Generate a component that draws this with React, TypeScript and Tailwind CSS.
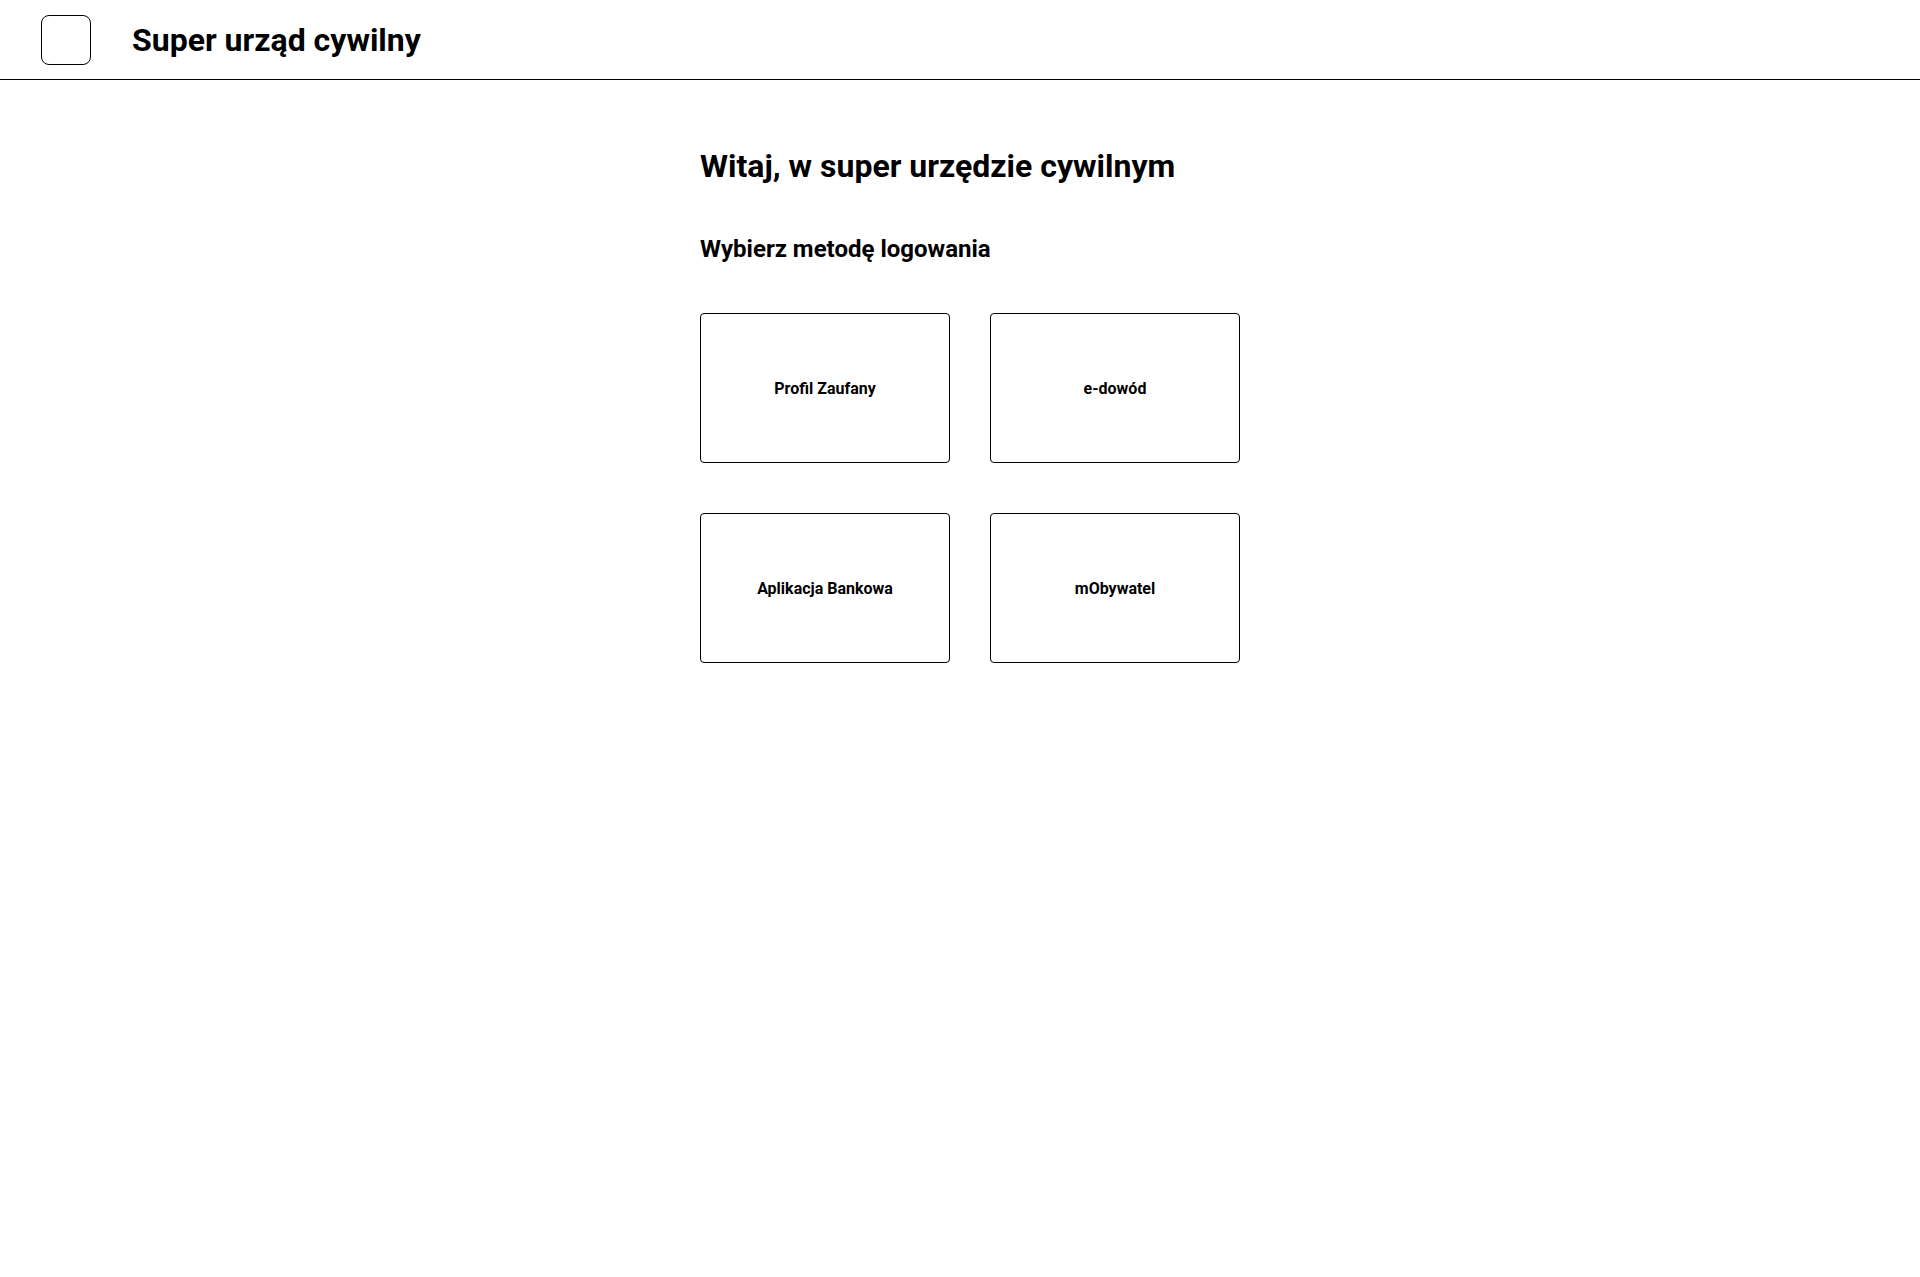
import React from "react";

const methods = ["Profil Zaufany", "e-dowód", "Aplikacja Bankowa", "mObywatel"];

export default function App() {
  return (
    <div className="min-h-[1277px] w-full bg-white text-black" style={{ fontFamily: "Roboto, 'Noto Sans', sans-serif" }}>
      <header className="flex h-[80px] items-center gap-[41px] border-b border-black pl-[41px]">
        <div className="h-[50px] w-[50px] rounded-[8px] border border-black" />
        <h1 className="text-[32px] font-bold leading-[40px]">Super urząd cywilny</h1>
      </header>
      <main className="ml-[700px] w-[540px] pt-[66px]">
        <h2 className="text-[32px] font-bold leading-[40px]">Witaj, w super urzędzie cywilnym</h2>
        <h3 className="mt-[47px] text-[24px] font-bold leading-[32px]">Wybierz metodę logowania</h3>
        <div className="mt-[48px] grid grid-cols-[250px_250px] gap-x-[40px] gap-y-[50px]">
          {methods.map((m) => (
            <button
              key={m}
              className="flex h-[150px] w-[250px] items-center justify-center rounded-[4px] border border-black bg-white pt-[2px] text-[16px] font-bold text-black"
            >
              {m}
            </button>
          ))}
        </div>
      </main>
    </div>
  );
}
